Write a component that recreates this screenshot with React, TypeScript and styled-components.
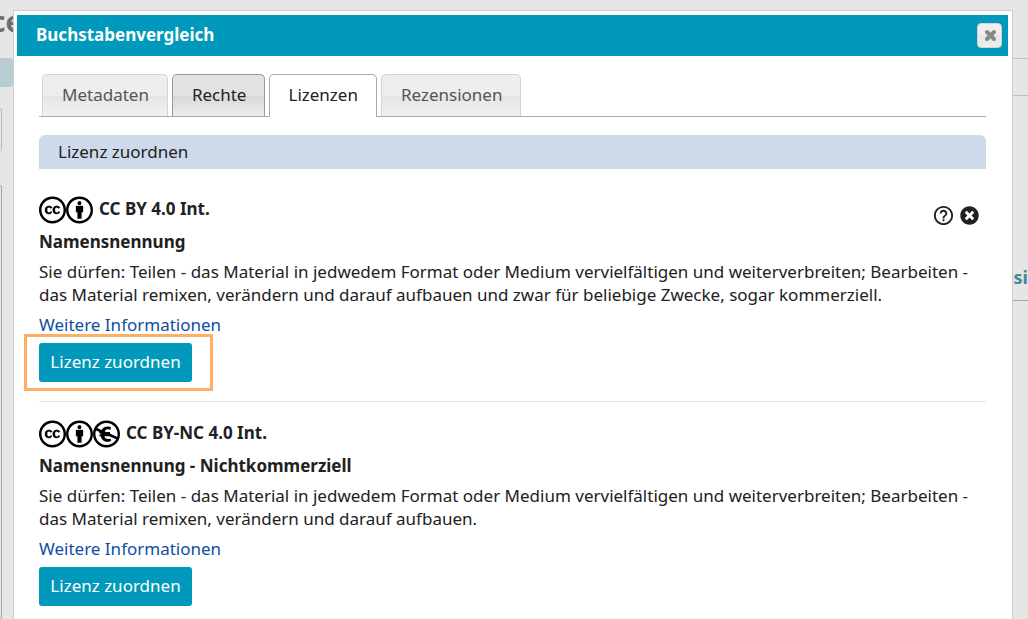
import React from "react";
import styled, { createGlobalStyle, css } from "styled-components";
import {
  FaCreativeCommons,
  FaCreativeCommonsBy,
  FaCreativeCommonsNcEu,
  FaTimesCircle,
} from "react-icons/fa";
import { MdHelpOutline } from "react-icons/md";

const GlobalStyle = createGlobalStyle`
  *, *::before, *::after { box-sizing: border-box; }
  body {
    margin: 0;
    background: #e6e6e6;
    color: #212121;
    font-family: "Noto Sans", "Open Sans", sans-serif;
    font-size: 17px;
    line-height: 23px;
  }
  h1, h2, h3, p { margin: 0; font-size: inherit; }
  button { font: inherit; cursor: pointer; }
`;

const Page = styled.div`
  display: flex;
  height: 100vh;
  overflow: hidden;
`;

const Side = styled.div<{ $width: number }>`
  display: flex;
  flex-direction: column;
  flex: none;
  width: ${(p) => p.$width}px;
  overflow: hidden;
`;

const LeftSide = styled(Side)`
  align-items: flex-start;
`;

const SiteTitle = styled.div`
  width: 13px;
  height: 58px;
  padding-top: 2px;
  display: flex;
  color: #6d6d6d;
  font-size: 28px;
  font-weight: 700;
  line-height: 38px;

  span { margin-left: -9px; }
`;

const SiteTab = styled.div`
  width: 13px;
  height: 29px;
  margin-bottom: 21px;
  border-radius: 0 4px 4px 0;
  background: #b8cdd1;
`;

const SitePanel = styled.div<{ $tall?: boolean }>`
  width: 2px;
  height: 43px;
  margin-bottom: 34px;
  border: 1px solid #b9b9b9;
  border-left: 0;
  border-radius: 0 4px 4px 0;
  ${(p) =>
    p.$tall &&
    css`
      flex: 1;
      margin-bottom: 0;
      border-color: #a4a4a4;
    `}
`;

const SiteBand = styled.div`
  height: 38px;
  margin-top: 58px;
  border: solid #c0c0c0;
  border-width: 1px 0;
`;

const SiteHeading = styled.div`
  height: 205px;
  padding-top: 170px;
  border-bottom: 1px solid #a4a4a4;
  color: #40889a;
  font-size: 18px;
  font-weight: 700;
  display: flex;
  justify-content: flex-end;
`;

const Dialog = styled.section`
  flex: 1;
  min-width: 0;
  margin-top: 10px;
  padding: 4px 4px 0 3px;
  border: solid #cccccc;
  border-width: 1px 1px 0;
  background: #ffffff;
`;

const TitleBar = styled.header`
  display: flex;
  align-items: center;
  justify-content: space-between;
  height: 41px;
  padding: 0 6px 0 19px;
  background: #0099bc;
  color: #ffffff;

  h1 {
    padding-bottom: 2px;
    font-weight: 700;
  }
`;

const CloseButton = styled.button`
  display: flex;
  align-items: center;
  justify-content: center;
  width: 25px;
  height: 25px;
  padding: 0 0 0 1px;
  border: 1px solid #d3d3d3;
  border-radius: 4px;
  background: linear-gradient(#efefef 50%, #e6e6e6 50%, #eeeeee);
`;

const Content = styled.div`
  padding: 18px 22px 0;
`;

const Tabs = styled.div`
  display: flex;
  gap: 4px;
  height: 43px;
  padding-left: 3px;
  border-bottom: 1px solid #aaaaaa;
`;

const Tab = styled.button<{ $look?: "hover" | "active" }>`
  height: 42px;
  padding: 0 18px 3px 19px;
  border: 1px solid #d3d3d3;
  border-bottom: 0;
  border-radius: 5px 5px 0 0;
  background: linear-gradient(#eeeeee 50%, #e5e5e5 50%, #f1f1f1);
  color: #555555;
  ${(p) =>
    p.$look === "hover" &&
    css`
      border-color: #999999;
      background: linear-gradient(#e2e2e2 50%, #d8d8d8 50%, #ececec);
      color: #212121;
    `}
  ${(p) =>
    p.$look === "active" &&
    css`
      height: 43px;
      padding: 0 18px 4px;
      border-color: #aaaaaa;
      background: #ffffff;
      color: #212121;
    `}
`;

const SectionBar = styled.h2`
  height: 34px;
  margin: 18px 0 9px;
  padding: 5px 19px;
  border-radius: 6px 6px 0 0;
  background: #cedaea;
  font-weight: 400;
`;

const License = styled.article`
  height: 224px;
  padding-top: 18px;
  border-bottom: 1px solid #e2e2e2;
`;

const LicenseHead = styled.div`
  display: flex;
  justify-content: space-between;
  height: 34px;
`;

const LicenseName = styled.div`
  display: flex;
  gap: 6px;
  font-weight: 700;
  line-height: 25px;
`;

const Badges = styled.span`
  display: flex;
  color: #000000;

  svg { width: 27px; height: 28px; }
`;

const Actions = styled.div`
  display: flex;
  align-items: center;
  gap: 5px;
  height: 39px;
  padding-right: 7px;
`;

const IconButton = styled.button`
  display: flex;
  padding: 0;
  border: 0;
  background: none;
  color: #212121;
`;

const Subtitle = styled.h3`
  font-weight: 700;
  margin-bottom: 7px;
`;

const MoreLink = styled.a`
  display: block;
  width: fit-content;
  margin: 7px 0;
  color: #0d4ea6;
  text-decoration: none;
`;

const AssignSlot = styled.div<{ $marked?: boolean }>`
  position: relative;
  width: fit-content;
  ${(p) =>
    p.$marked &&
    css`
      &::after {
        content: "";
        position: absolute;
        inset: -9px -21px -9px -15px;
        border: 3px solid #fdb062;
        pointer-events: none;
      }
    `}
`;

const AssignButton = styled.button`
  display: block;
  min-width: 153px;
  height: 39px;
  padding: 0 11px 3px;
  border: 0;
  border-radius: 3px;
  background: #0099bc;
  color: #ffffff;
`;

type LicenseItem = {
  name: string;
  title: string;
  text: string;
  badges: React.ComponentType[];
  assigned?: boolean;
};

const licenses: LicenseItem[] = [
  {
    name: "CC BY 4.0 Int.",
    title: "Namensnennung",
    text: "Sie dürfen: Teilen - das Material in jedwedem Format oder Medium vervielfältigen und weiterverbreiten; Bearbeiten - das Material remixen, verändern und darauf aufbauen und zwar für beliebige Zwecke, sogar kommerziell.",
    badges: [FaCreativeCommons, FaCreativeCommonsBy],
    assigned: true,
  },
  {
    name: "CC BY-NC 4.0 Int.",
    title: "Namensnennung - Nichtkommerziell",
    text: "Sie dürfen: Teilen - das Material in jedwedem Format oder Medium vervielfältigen und weiterverbreiten; Bearbeiten - das Material remixen, verändern und darauf aufbauen.",
    badges: [FaCreativeCommons, FaCreativeCommonsBy, FaCreativeCommonsNcEu],
  },
];

export default function App() {
  return (
    <>
      <GlobalStyle />
      <Page>
        <LeftSide $width={13}>
          <SiteTitle>
            <span>ce</span>
          </SiteTitle>
          <SiteTab />
          <SitePanel />
          <SitePanel $tall />
        </LeftSide>
        <Dialog role="dialog" aria-labelledby="dialog-title">
          <TitleBar>
            <h1 id="dialog-title">Buchstabenvergleich</h1>
            <CloseButton aria-label="Schließen">
              <svg width="13" height="13" viewBox="0 0 13 13">
                <path d="M3 3L10 10M10 3L3 10" stroke="#888888" strokeWidth="4" strokeLinecap="round" />
              </svg>
            </CloseButton>
          </TitleBar>
          <Content>
            <Tabs role="tablist">
              <Tab role="tab">Metadaten</Tab>
              <Tab role="tab" $look="hover">Rechte</Tab>
              <Tab role="tab" $look="active" aria-selected>Lizenzen</Tab>
              <Tab role="tab">Rezensionen</Tab>
            </Tabs>
            <SectionBar>Lizenz zuordnen</SectionBar>
            {licenses.map((item) => (
              <License key={item.name}>
                <LicenseHead>
                  <LicenseName>
                    <Badges>
                      {item.badges.map((Badge, i) => (
                        <Badge key={i} />
                      ))}
                    </Badges>
                    {item.name}
                  </LicenseName>
                  {item.assigned && (
                    <Actions>
                      <IconButton aria-label="Hilfe">
                        <MdHelpOutline size={23} />
                      </IconButton>
                      <IconButton aria-label="Entfernen">
                        <FaTimesCircle size={19} />
                      </IconButton>
                    </Actions>
                  )}
                </LicenseHead>
                <Subtitle>{item.title}</Subtitle>
                <p>{item.text}</p>
                <MoreLink href="#">Weitere Informationen</MoreLink>
                <AssignSlot $marked={item.assigned}>
                  <AssignButton>Lizenz zuordnen</AssignButton>
                </AssignSlot>
              </License>
            ))}
          </Content>
        </Dialog>
        <Side $width={15}>
          <SiteBand />
          <SiteHeading>nsi</SiteHeading>
        </Side>
      </Page>
    </>
  );
}
